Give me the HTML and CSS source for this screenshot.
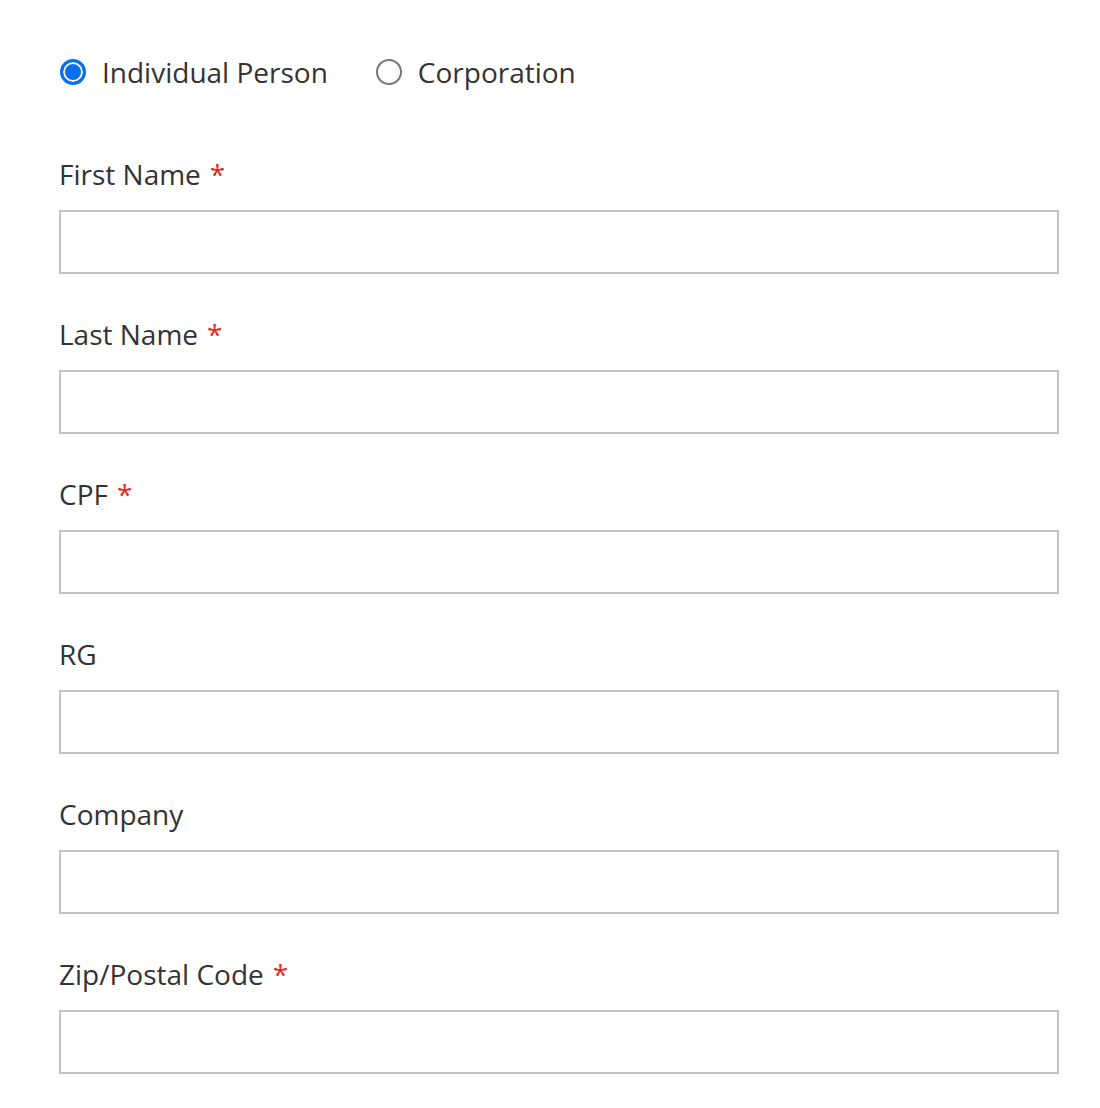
FILE: index.html
```html
<!DOCTYPE html>
<html lang="en">
<head>
<meta charset="utf-8">
<title>Customer form</title>
<link rel="stylesheet" href="styles.css">
</head>
<body>
<form class="form">
  <div class="radios">
    <label class="radio">
      <span class="radio-dot checked"></span>
      <span class="radio-text">Individual Person</span>
    </label>
    <label class="radio">
      <span class="radio-dot"></span>
      <span class="radio-text">Corporation</span>
    </label>
  </div>
  <div class="field">
    <label class="label required">First Name</label>
    <div class="input"></div>
  </div>
  <div class="field">
    <label class="label required">Last Name</label>
    <div class="input"></div>
  </div>
  <div class="field">
    <label class="label required">CPF</label>
    <div class="input"></div>
  </div>
  <div class="field">
    <label class="label">RG</label>
    <div class="input"></div>
  </div>
  <div class="field">
    <label class="label">Company</label>
    <div class="input"></div>
  </div>
  <div class="field">
    <label class="label required">Zip/Postal Code</label>
    <div class="input"></div>
  </div>
</form>
</body>
</html>
```
FILE: styles.css
```css
html, body {
  margin: 0;
  padding: 0;
  background: #fff;
}
body {
  font-family: "Open Sans", "Liberation Sans", sans-serif;
  color: #333;
  font-size: 28px;
}
.form {
  padding: 52px 41px 0 59px;
  display: flex;
  flex-direction: column;
}
.radios {
  display: flex;
  align-items: center;
  gap: 47px;
  height: 40px;
  margin-bottom: 62px;
}
.radio {
  display: flex;
  align-items: center;
  gap: 16px;
  line-height: 40px;
}
.radio-dot {
  box-sizing: border-box;
  width: 26px;
  height: 26px;
  border-radius: 50%;
  border: 2px solid #767676;
  background: #fff;
  margin-left: 1px;
}
.radio-dot.checked {
  border: 3px solid #0a6ff5;
  box-shadow: inset 0 0 0 2px #fff;
  background: #0a6ff5;
}
.field {
  display: flex;
  flex-direction: column;
  margin-bottom: 40px;
}
.label {
  line-height: 40px;
  margin-bottom: 16px;
}
.label.required::after {
  content: "*";
  color: #e02b27;
  margin-left: 9px;
}
.input {
  box-sizing: border-box;
  width: 1000px;
  height: 64px;
  border: 2px solid #c2c2c2;
  background: #fff;
}
```
